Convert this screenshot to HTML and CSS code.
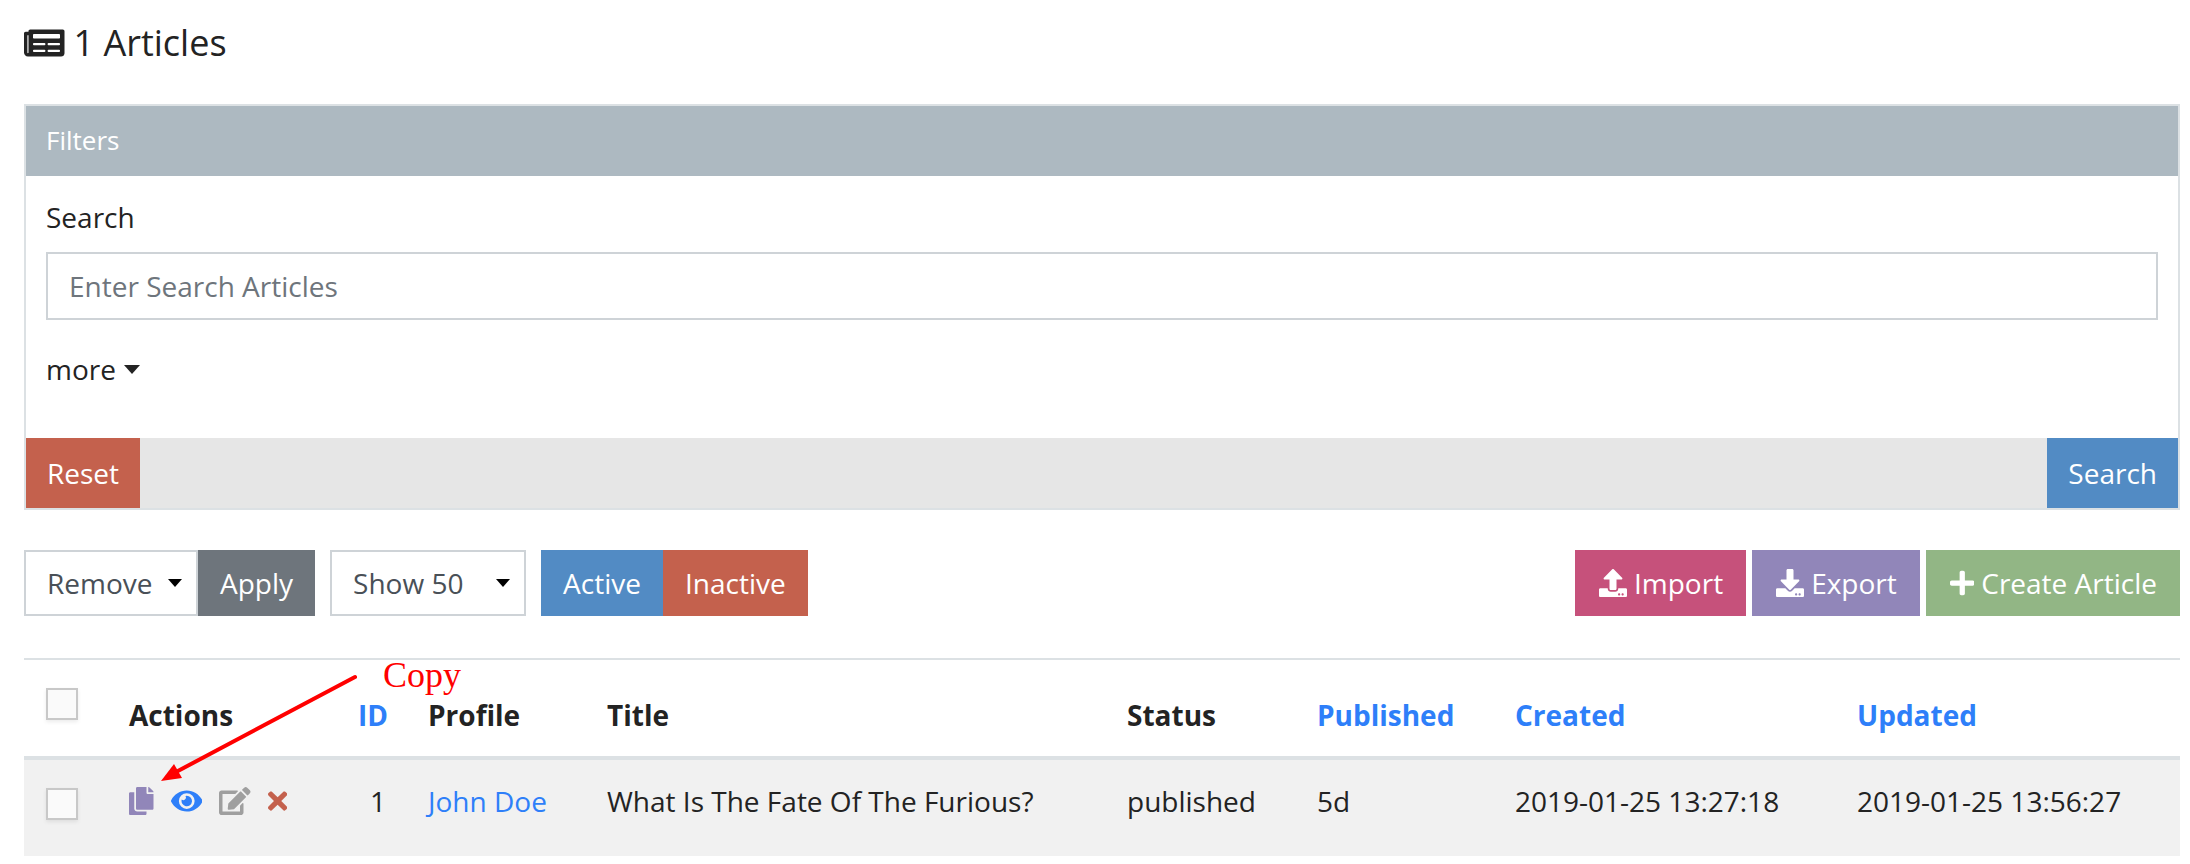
FILE: index.html
```html
<!DOCTYPE html>
<html lang="en">
<head>
<meta charset="utf-8">
<title>Articles</title>
<link rel="stylesheet" href="styles.css">
</head>
<body>
<main class="page">
  <h1 class="page-title">
    <svg class="icon" viewBox="0 0 576 512" aria-hidden="true"><path d="M552 64H88c-13.255 0-24 10.745-24 24v8H24c-13.255 0-24 10.745-24 24v272c0 30.928 25.072 56 56 56h472c26.51 0 48-21.49 48-48V88c0-13.255-10.745-24-24-24zM56 400a8 8 0 0 1-8-8V144h16v248a8 8 0 0 1-8 8zm236-16H140c-6.627 0-12-5.373-12-12v-8c0-6.627 5.373-12 12-12h152c6.627 0 12 5.373 12 12v8c0 6.627-5.373 12-12 12zm208 0H348c-6.627 0-12-5.373-12-12v-8c0-6.627 5.373-12 12-12h152c6.627 0 12 5.373 12 12v8c0 6.627-5.373 12-12 12zm-208-96H140c-6.627 0-12-5.373-12-12v-8c0-6.627 5.373-12 12-12h152c6.627 0 12 5.373 12 12v8c0 6.627-5.373 12-12 12zm208 0H348c-6.627 0-12-5.373-12-12v-8c0-6.627 5.373-12 12-12h152c6.627 0 12 5.373 12 12v8c0 6.627-5.373 12-12 12zm0-96H140c-6.627 0-12-5.373-12-12v-40c0-6.627 5.373-12 12-12h360c6.627 0 12 5.373 12 12v40c0 6.627-5.373 12-12 12z"/></svg>
    <span>1 Articles</span>
  </h1>

  <form class="card">
    <div class="card-header">Filters</div>
    <div class="card-body">
      <label class="field-label" for="search">Search</label>
      <input class="field" id="search" type="text" placeholder="Enter Search Articles">
      <button class="more" type="button">more <span class="caret"></span></button>
    </div>
    <div class="card-footer">
      <button class="footer-btn red" type="reset">Reset</button>
      <button class="footer-btn blue" type="submit">Search</button>
    </div>
  </form>

  <div class="toolbar">
    <div class="group">
      <select class="select select-action" aria-label="Bulk action"><option>Remove</option></select>
      <button class="btn gray" type="button">Apply</button>
    </div>
    <select class="select select-show" aria-label="Rows shown"><option>Show 50</option></select>
    <div class="group">
      <button class="btn blue" type="button">Active</button>
      <button class="btn red" type="button">Inactive</button>
    </div>
    <div class="tools">
      <button class="btn tool pink" type="button"><svg class="icon" viewBox="0 0 512 512" aria-hidden="true"><path d="M296 384h-80c-13.3 0-24-10.7-24-24V192h-87.7c-17.8 0-26.7-21.5-14.1-34.1L242.3 5.7c7.5-7.5 19.8-7.5 27.3 0l152.2 152.2c12.6 12.6 3.7 34.1-14.1 34.1H320v168c0 13.3-10.7 24-24 24zm216-8v112c0 13.3-10.7 24-24 24H24c-13.3 0-24-10.7-24-24V376c0-13.3 10.7-24 24-24h136v8c0 30.9 25.1 56 56 56h80c30.9 0 56-25.1 56-56v-8h136c13.3 0 24 10.7 24 24zm-124 88c0-11-9-20-20-20s-20 9-20 20 9 20 20 20 20-9 20-20zm64 0c0-11-9-20-20-20s-20 9-20 20 9 20 20 20 20-9 20-20z"/></svg>Import</button>
      <button class="btn tool purple" type="button"><svg class="icon" viewBox="0 0 512 512" aria-hidden="true"><path d="M216 0h80c13.3 0 24 10.7 24 24v168h87.7c17.8 0 26.7 21.5 14.1 34.1L269.7 378.3c-7.5 7.5-19.8 7.5-27.3 0L90.1 226.1c-12.6-12.6-3.7-34.1 14.1-34.1H192V24c0-13.3 10.7-24 24-24zm296 376v112c0 13.3-10.7 24-24 24H24c-13.3 0-24-10.7-24-24V376c0-13.3 10.7-24 24-24h146.7l49 49c20.1 20.1 52.5 20.1 72.6 0l49-49H488c13.3 0 24 10.7 24 24zm-124 88c0-11-9-20-20-20s-20 9-20 20 9 20 20 20 20-9 20-20zm64 0c0-11-9-20-20-20s-20 9-20 20 9 20 20 20 20-9 20-20z"/></svg>Export</button>
      <button class="btn tool green" type="button"><svg class="icon" viewBox="0 0 448 512" aria-hidden="true"><path d="M416 208H272V64c0-17.67-14.33-32-32-32h-32c-17.67 0-32 14.33-32 32v144H32c-17.67 0-32 14.33-32 32v32c0 17.67 14.33 32 32 32h144v144c0 17.67 14.33 32 32 32h32c17.67 0 32-14.33 32-32V304h144c17.67 0 32-14.33 32-32v-32c0-17.67-14.33-32-32-32z"/></svg>Create Article</button>
    </div>
  </div>

  <div class="table-wrap">
    <table class="table">
      <colgroup>
        <col class="col-check"><col class="col-actions"><col class="col-id"><col class="col-profile"><col><col class="col-status"><col class="col-published"><col class="col-created"><col class="col-updated">
      </colgroup>
      <thead>
        <tr>
          <th class="check-cell"><input class="check" type="checkbox" aria-label="Select all articles"></th>
          <th>Actions</th>
          <th class="num"><a href="#id">ID</a></th>
          <th>Profile</th>
          <th>Title</th>
          <th>Status</th>
          <th><a href="#published">Published</a></th>
          <th><a href="#created">Created</a></th>
          <th><a href="#updated">Updated</a></th>
        </tr>
      </thead>
      <tbody>
        <tr>
          <td class="check-cell"><input class="check" type="checkbox" aria-label="Select article 1"></td>
          <td>
            <div class="actions">
              <a class="act-copy" href="#copy" aria-label="Copy"><svg class="icon" viewBox="0 0 448 512"><path d="M320 448v40c0 13.255-10.745 24-24 24H24c-13.255 0-24-10.745-24-24V120c0-13.255 10.745-24 24-24h72v296c0 30.879 25.121 56 56 56h168zm0-344V0H152c-13.255 0-24 10.745-24 24v368c0 13.255 10.745 24 24 24h272c13.255 0 24-10.745 24-24V128H344c-13.2 0-24-10.8-24-24zm120.971-31.029L375.029 7.029A24 24 0 0 0 358.059 0H352v96h96v-6.059a24 24 0 0 0-7.029-16.97z"/></svg></a>
              <a class="act-view" href="#view" aria-label="View"><svg class="icon" viewBox="0 0 576 512"><path d="M572.52 241.4C518.29 135.59 410.93 64 288 64S57.68 135.64 3.48 241.41a32.35 32.35 0 0 0 0 29.19C57.71 376.41 165.07 448 288 448s230.32-71.64 284.52-177.41a32.35 32.35 0 0 0 0-29.19zM288 400a144 144 0 1 1 144-144 143.93 143.93 0 0 1-144 144zm0-240a95.31 95.31 0 0 0-25.31 3.79 47.85 47.85 0 0 1-66.9 66.9A95.78 95.78 0 1 0 288 160z"/></svg></a>
              <a class="act-edit" href="#edit" aria-label="Edit"><svg class="icon" viewBox="0 0 576 512"><path d="M402.6 83.2l90.2 90.2c3.8 3.8 3.8 10 0 13.8L274.4 405.6l-92.8 10.3c-12.4 1.4-22.9-9.1-21.5-21.5l10.3-92.8L388.8 83.2c3.8-3.8 10-3.8 13.8 0zm162-22.9l-48.8-48.8c-15.2-15.2-39.9-15.2-55.2 0l-35.4 35.4c-3.8 3.8-3.8 10 0 13.8l90.2 90.2c3.8 3.8 10 3.8 13.8 0l35.4-35.4c15.2-15.3 15.2-40 0-55.2zM384 346.2V448H64V128h229.8c3.2 0 6.2-1.3 8.5-3.5l40-40c7.6-7.6 2.2-20.5-8.5-20.5H48C21.5 64 0 85.5 0 112v352c0 26.5 21.5 48 48 48h352c26.5 0 48-21.5 48-48V306.2c0-10.7-12.9-16-20.5-8.5l-40 40c-2.2 2.3-3.5 5.3-3.5 8.5z"/></svg></a>
              <a class="act-delete" href="#delete" aria-label="Delete"><svg class="icon" viewBox="0 0 352 512"><path d="M242.72 256l100.07-100.07c12.28-12.28 12.28-32.19 0-44.48l-22.24-22.24c-12.28-12.28-32.19-12.28-44.48 0L176 189.28 75.93 89.21c-12.28-12.28-32.19-12.28-44.48 0L9.21 111.45c-12.28 12.28-12.28 32.19 0 44.48L109.28 256 9.21 356.07c-12.28 12.28-12.28 32.19 0 44.48l22.24 22.24c12.28 12.28 32.2 12.28 44.48 0L176 322.72l100.07 100.07c12.28 12.28 32.2 12.28 44.48 0l22.24-22.24c12.28-12.28 12.28-32.19 0-44.48L242.72 256z"/></svg></a>
            </div>
          </td>
          <td class="num">1</td>
          <td><a href="#profile">John Doe</a></td>
          <td>What Is The Fate Of The Furious?</td>
          <td>published</td>
          <td>5d</td>
          <td>2019-01-25 13:27:18</td>
          <td>2019-01-25 13:56:27</td>
        </tr>
      </tbody>
    </table>
    <svg class="callout-arrow" viewBox="0 0 200 130" aria-hidden="true"><line x1="16" y1="114" x2="195" y2="19"/><polygon points="1,123 14,106 22,120"/></svg>
    <span class="callout-text">Copy</span>
  </div>
</main>
</body>
</html>
```
FILE: styles.css
```css
* {
  box-sizing: border-box;
}

body {
  margin: 0;
  background: #fff;
  color: #232323;
  font: 28px/42px "Open Sans", "Noto Sans", sans-serif;
}

button,
input,
select {
  margin: 0;
  font: inherit;
  border-radius: 0;
}

button {
  cursor: pointer;
}

a {
  color: #2e7ff9;
  text-decoration: none;
}

.icon {
  display: block;
  height: 1em;
  fill: currentColor;
}

.page {
  padding: 20px 10px 0 24px;
}

.page-title {
  display: flex;
  align-items: center;
  gap: 9px;
  margin: 0 0 38px;
  font-size: 36px;
  font-weight: 400;
  line-height: 46px;
}

/* Filters */
.card {
  margin: 0 0 40px;
  border: 2px solid #dce1e4;
}

.card-header {
  padding: 13px 20px 15px;
  background: #adb9c1;
  color: #fff;
  font-size: 26px;
}

.card-body {
  padding: 20px 20px 48px;
}

.field-label {
  display: block;
  margin-bottom: 14px;
}

.field {
  display: block;
  width: 100%;
  height: 68px;
  padding: 0 21px;
  border: 2px solid #ced3d7;
  background: #fff;
  color: #495057;
}

.field::placeholder {
  color: #6e757c;
  opacity: 1;
}

.more {
  display: flex;
  align-items: center;
  gap: 8px;
  margin-top: 28px;
  padding: 0;
  border: 0;
  background: none;
  color: inherit;
}

.caret {
  border: 8px solid transparent;
  border-top: 9px solid currentColor;
  border-bottom: 0;
}

.card-footer {
  display: flex;
  justify-content: space-between;
  background: #e6e6e6;
}

.footer-btn {
  padding: 14px 21px;
  border: 0;
  color: #fff;
}

/* Toolbar */
.toolbar {
  display: flex;
  gap: 15px;
  margin-bottom: 42px;
}

.group {
  display: flex;
}

.btn {
  height: 66px;
  padding: 0 22px;
  border: 0;
  color: #fff;
}

.tools {
  display: flex;
  gap: 6px;
  margin-left: auto;
}

.tool {
  display: flex;
  align-items: center;
  gap: 7px;
  padding: 0 23px 0 24px;
}

.select {
  height: 66px;
  padding: 0 21px;
  border: 2px solid #ced3d7;
  appearance: none;
  background: #fff url("data:image/svg+xml,%3Csvg xmlns='http://www.w3.org/2000/svg' viewBox='0 0 14 8'%3E%3Cpath d='M0 0h14L7 8z'/%3E%3C/svg%3E") no-repeat right 14px center / 14px 8px;
  color: #495057;
}

.select-action {
  width: 174px;
}

.select-show {
  width: 196px;
}

.red {
  background: #c4614d;
}

.blue {
  background: #528bc4;
}

.gray {
  background: #6e757c;
}

.pink {
  background: #c6517b;
}

.purple {
  background: #9186b9;
}

.green {
  background: #92b685;
}

/* Articles table */
.table-wrap {
  position: relative;
}

.table {
  width: 100%;
  table-layout: fixed;
  border-collapse: separate;
  border-spacing: 0;
}

.col-check { width: 84px; }
.col-actions { width: 229px; }
.col-id { width: 70px; }
.col-profile { width: 179px; }
.col-status { width: 190px; }
.col-published { width: 198px; }
.col-created { width: 342px; }
.col-updated { width: 344px; }

.table th,
.table td {
  height: 96px;
  padding: 20px 21px;
  text-align: left;
  vertical-align: top;
  white-space: nowrap;
}

.table th {
  height: 102px;
  border-top: 2px solid #dce1e4;
  border-bottom: 4px solid #dce1e4;
  vertical-align: bottom;
}

.table td {
  background: #f1f1f1;
}

.table .num {
  text-align: right;
}

.table .check-cell {
  padding: 28px 22px;
  vertical-align: top;
}

.check {
  display: block;
  width: 32px;
  height: 32px;
  appearance: none;
  border: 2px solid #c8c8c8;
  background: #fafafa;
  box-shadow: 0 2px 4px rgba(0, 0, 0, 0.08);
}

.actions {
  display: flex;
  align-items: center;
  gap: 17px;
  height: 42px;
}

.act-copy { color: #9186b9; }
.act-edit { color: #9f9f9f; }
.act-delete { color: #c4614d; }

/* Annotation over the table */
.callout-arrow {
  position: absolute;
  top: 0;
  left: 136px;
  width: 200px;
  height: 130px;
  fill: #f00;
}

.callout-arrow line {
  stroke: #f00;
  stroke-width: 4;
  stroke-linecap: round;
}

.callout-text {
  position: absolute;
  top: -5px;
  left: 359px;
  color: #f00;
  font: 36px/44px "Liberation Serif", serif;
}
```
